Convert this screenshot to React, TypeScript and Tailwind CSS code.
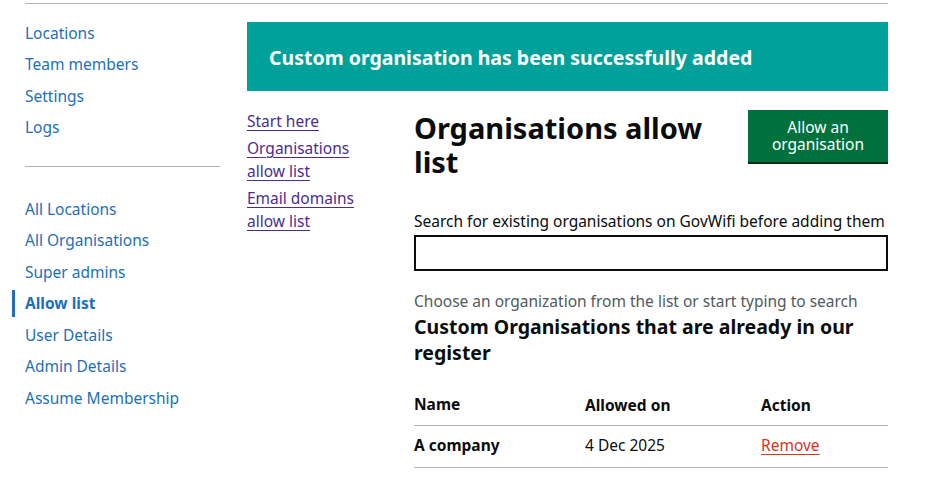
const nav1 = ['Locations', 'Team members', 'Settings', 'Logs'];
const nav2 = ['All Locations', 'All Organisations', 'Super admins', 'Allow list', 'User Details', 'Admin Details', 'Assume Membership'];

export default function App() {
  return (
    <div className="min-h-screen bg-white text-[#0b0c0c] font-['Noto_Sans',sans-serif]">
      <div className="ml-[25px] w-[863px] border-t border-[#b1b4b6] mt-[3px] flex gap-[27px]">
        {/* left nav */}
        <aside className="w-[195px] shrink-0 pt-[14px]">
          <ul className="flex flex-col">
            {nav1.map((n) => (
              <li key={n} className="h-[31.4px] text-[15.5px] text-[#1d70b8] leading-[31.4px]">{n}</li>
            ))}
          </ul>
          <div className="border-t border-[#b1b4b6] mt-[22px] mb-[27px]" />
          <ul className="flex flex-col">
            {nav2.map((n) => (
              <li
                key={n}
                className={
                  n === 'Allow list'
                    ? 'relative h-[31.5px] text-[15.5px] leading-[31.5px] text-[#1d70b8] font-bold'
                    : 'h-[31.5px] text-[15.5px] leading-[31.5px] text-[#1d70b8]'
                }
              >
                {n === 'Allow list' && (
                  <span className="absolute left-[-13px] top-[2px] h-[27px] w-[3px] bg-[#1d70b8]" />
                )}
                {n}
              </li>
            ))}
          </ul>
        </aside>

        {/* main */}
        <main className="flex-1 pt-[18px]">
          <div className="h-[69px] bg-[#00a19a] flex items-center px-[22px]">
            <p className="text-white text-[19.5px] font-bold mt-[3px]">Custom organisation has been successfully added</p>
          </div>

          <div className="flex mt-[19px]">
            <nav className="w-[167px] shrink-0">
              <ul className="flex flex-col gap-[4px] text-[15.5px] leading-[23px] text-[#4c2c92]">
                <li><span className="underline underline-offset-[3px]">Start here</span></li>
                <li className="w-[120px]"><span className="underline underline-offset-[3px]">Organisations allow list</span></li>
                <li className="w-[120px]"><span className="underline underline-offset-[3px]">Email domains allow list</span></li>
              </ul>
            </nav>

            <section className="flex-1">
              <div className="flex justify-between items-start">
                <h1 className="w-[300px] text-[29px] font-bold leading-[34px] mt-[1px]">Organisations allow list</h1>
                <button className="w-[140px] h-[52px] bg-[#00703c] text-white text-[15.5px] leading-[17px] shadow-[0_2px_0_#002d18] flex items-center justify-center px-3">
                  Allow an organisation
                </button>
              </div>

              <label className="block mt-[32px] text-[15.5px] leading-[20px] whitespace-nowrap">
                Search for existing organisations on GovWifi before adding them
              </label>
              <div className="mt-[4px] h-[36px] border-2 border-[#0b0c0c]" />

              <p className="mt-[20px] text-[15.5px] leading-[20px] text-[#505a5f] whitespace-nowrap">
                Choose an organization from the list or start typing to search
              </p>
              <h2 className="text-[19.5px] font-bold leading-[26px] mt-[3px]">
                Custom Organisations that are already in our register
              </h2>

              <table className="w-full mt-[20px] text-[15.5px] border-collapse">
                <thead>
                  <tr className="border-b border-[#b1b4b6] text-left">
                    <th className="w-[171px] font-bold h-[39px] pb-[1px]">Name</th>
                    <th className="w-[176px] font-bold">Allowed on</th>
                    <th className="font-bold">Action</th>
                  </tr>
                </thead>
                <tbody>
                  <tr className="border-b border-[#b1b4b6]">
                    <td className="font-bold h-[42px]">A company</td>
                    <td>4 Dec 2025</td>
                    <td><span className="text-[#d4351c] underline underline-offset-[3px]">Remove</span></td>
                  </tr>
                </tbody>
              </table>
            </section>
          </div>
        </main>
      </div>
    </div>
  );
}
